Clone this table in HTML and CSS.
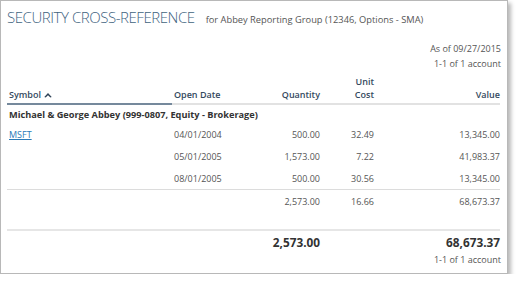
FILE: index.html
```html
<!DOCTYPE html>
<html>
<head>
<meta charset="utf-8">
<link rel="stylesheet" href="styles.css">
</head>
<body>
<div class="frame">
  <div class="titlebar">
    <span class="title">SECURITY CROSS-REFERENCE</span>
    <span class="subtitle">for Abbey Reporting Group (12346, Options - SMA)</span>
  </div>
  <div class="meta">
    <div>As of 09/27/2015</div>
    <div>1-1 of 1 account</div>
  </div>
  <table class="grid">
    <colgroup>
      <col class="c1"><col class="c2"><col class="c3"><col class="c4"><col class="c5">
    </colgroup>
    <thead>
      <tr>
        <th class="sorted">Symbol <svg class="arrow" width="8" height="6" viewBox="0 0 8 6"><path d="M0.3 5 L4 1 L7.7 5 L6.4 5.6 L4 3.2 L1.6 5.6 Z" fill="#2e4257"/></svg></th>
        <th class="l">Open Date</th>
        <th class="r">Quantity</th>
        <th class="r">Unit<br>Cost</th>
        <th class="r">Value</th>
      </tr>
    </thead>
    <tbody>
      <tr class="group"><td colspan="5">Michael &amp; George Abbey (999-0807, Equity - Brokerage)</td></tr>
      <tr class="row"><td><a href="#" class="link">MSFT</a></td><td class="l">04/01/2004</td><td class="r">500.00</td><td class="r">32.49</td><td class="r">13,345.00</td></tr>
      <tr class="row"><td></td><td class="l">05/01/2005</td><td class="r">1,573.00</td><td class="r">7.22</td><td class="r">41,983.37</td></tr>
      <tr class="row last"><td></td><td class="l">08/01/2005</td><td class="r">500.00</td><td class="r">30.56</td><td class="r">13,345.00</td></tr>
      <tr class="row sub"><td></td><td></td><td class="r">2,573.00</td><td class="r">16.66</td><td class="r">68,673.37</td></tr>
      <tr class="spacer"><td colspan="5"></td></tr>
      <tr class="total"><td></td><td></td><td class="r">2,573.00</td><td></td><td class="r">68,673.37</td></tr>
    </tbody>
  </table>
  <div class="footer">1-1 of 1 account</div>
</div>
</body>
</html>
```

FILE: styles.css
```css
html, body {
  margin: 0;
  padding: 0;
  background: #fff;
}
body {
  font-family: "Open Sans", "Noto Sans", sans-serif;
  color: #444;
}
.frame {
  width: 494px;
  height: 272px;
  border: 1px solid #b8b8b8;
  padding: 0 6px;
  box-shadow: 3px 3px 4px rgba(0,0,0,0.28);
  display: flex;
  flex-direction: column;
}
.titlebar {
  display: flex;
  align-items: baseline;
  gap: 11px;
  padding-top: 6px;
  height: 20px;
  line-height: 20px;
}
.title {
  font-size: 15px;
  font-weight: 300;
  letter-spacing: -0.45px;
  color: #416380;
}
.subtitle {
  font-size: 9.3px;
  color: #555;
}
.meta {
  margin-top: 14px;
  text-align: right;
  font-size: 9px;
  line-height: 15px;
  color: #555;
}
.grid {
  width: 493px;
  table-layout: fixed;
  border-collapse: collapse;
  font-size: 9px;
}
.c1 { width: 165px; }
.c2 { width: 98px; }
.c3 { width: 50px; }
.c4 { width: 54px; }
.c5 { width: 126px; }
th {
  font-weight: 600;
  color: #34495e;
  vertical-align: bottom;
  height: 25px;
  padding: 5px 0 2px 0;
  line-height: 12.5px;
  border-bottom: 2px solid #e2e2e2;
  text-align: left;
}
th.sorted {
  border-bottom-color: #75899c;
  padding-left: 2px;
}
.arrow { vertical-align: 0px; margin-left: 1px; }
th.l, td.l { padding-left: 2px; text-align: left; }
th.r, .r { text-align: right; }
td { padding: 0; }
.group td {
  height: 18px;
  font-size: 9.2px;
  font-weight: 700;
  color: #333;
  padding-left: 2px;
  vertical-align: middle;
}
.row td {
  height: 22px;
  vertical-align: middle;
  color: #555;
}
.row td:first-child { padding-left: 2px; }
.row.last td { border-bottom: 1px solid #dcdcdc; }
.link { color: #2a7ab8; text-decoration: underline; }
.spacer td {
  height: 17px;
  border-bottom: 2px solid #e6e6e6;
}
.total td {
  height: 22px;
  font-size: 11.8px;
  font-weight: 700;
  color: #333;
  vertical-align: middle;
}
.footer {
  text-align: right;
  font-size: 9px;
  line-height: 14px;
  color: #555;
}
```
